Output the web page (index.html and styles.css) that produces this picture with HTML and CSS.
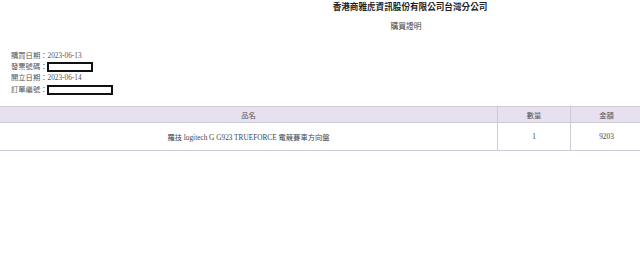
FILE: index.html
```html
<!DOCTYPE html>
<html lang="zh-Hant">
<head>
<meta charset="utf-8">
<title>購買證明</title>
<link rel="stylesheet" href="styles.css">
</head>
<body>
<div class="page">
  <header class="head">
    <div class="company">香港商雅虎資訊股份有限公司台灣分公司</div>
    <div class="doc-title">購買證明</div>
  </header>
  <section class="info">
    <div class="info-row">購買日期：2023-06-13</div>
    <div class="info-row">發票號碼：<span class="redact redact-short"></span></div>
    <div class="info-row">開立日期：2023-06-14</div>
    <div class="info-row">訂單編號：<span class="redact redact-long"></span></div>
  </section>
  <table class="items">
    <thead>
      <tr>
        <th class="col-name">品名</th>
        <th class="col-qty">數量</th>
        <th class="col-amt">金額</th>
      </tr>
    </thead>
    <tbody>
      <tr>
        <td class="col-name">羅技 logitech G G923 TRUEFORCE 電競賽車方向盤</td>
        <td class="col-qty">1</td>
        <td class="col-amt">9203</td>
      </tr>
    </tbody>
  </table>
</div>
</body>
</html>
```
FILE: styles.css
```css
html, body {
  margin: 0;
  padding: 0;
  background: #fff;
}
body {
  font-family: "Liberation Serif", "Noto Sans CJK TC", serif;
  color: #555;
  font-size: 7.3px;
}
.page {
  width: 640px;
}
.head {
  padding-left: 180px;
  text-align: center;
}
.company {
  font-family: "Noto Sans CJK TC", sans-serif;
  font-size: 8.6px;
  font-weight: 700;
  line-height: 12px;
  color: #222;
}
.doc-title {
  font-family: "Noto Sans CJK TC", sans-serif;
  font-size: 7.8px;
  line-height: 12px;
  margin-top: 8px;
  padding-right: 8px;
  color: #444;
}
.info {
  margin-top: 18px;
  padding-left: 11px;
}
.info-row {
  height: 11px;
  line-height: 11px;
  display: flex;
  align-items: center;
}
.redact {
  display: inline-block;
  box-sizing: border-box;
  border: 2px solid #111;
  background: #fff;
}
.redact-short {
  width: 46px;
  height: 10px;
}
.redact-long {
  width: 66px;
  height: 10px;
}
.info-row:nth-child(4) {
  margin-top: 1px;
}
.items {
  margin-top: 11px;
  width: 640px;
  border-collapse: collapse;
  table-layout: fixed;
}
.items th, .items td {
  padding: 0;
  text-align: center;
  font-weight: normal;
  border-top: 1px solid #cfcad6;
  border-bottom: 1px solid #cfcad6;
}
.items th {
  height: 15px;
  background: #e7e0f1;
  color: #555;
}
.items td {
  height: 27px;
  color: #444;
}
.col-name { width: 497px; }
.col-qty { width: 72px; border-left: 1px solid #cfcad6; }
.col-amt { width: 71px; border-left: 1px solid #cfcad6; }
```
